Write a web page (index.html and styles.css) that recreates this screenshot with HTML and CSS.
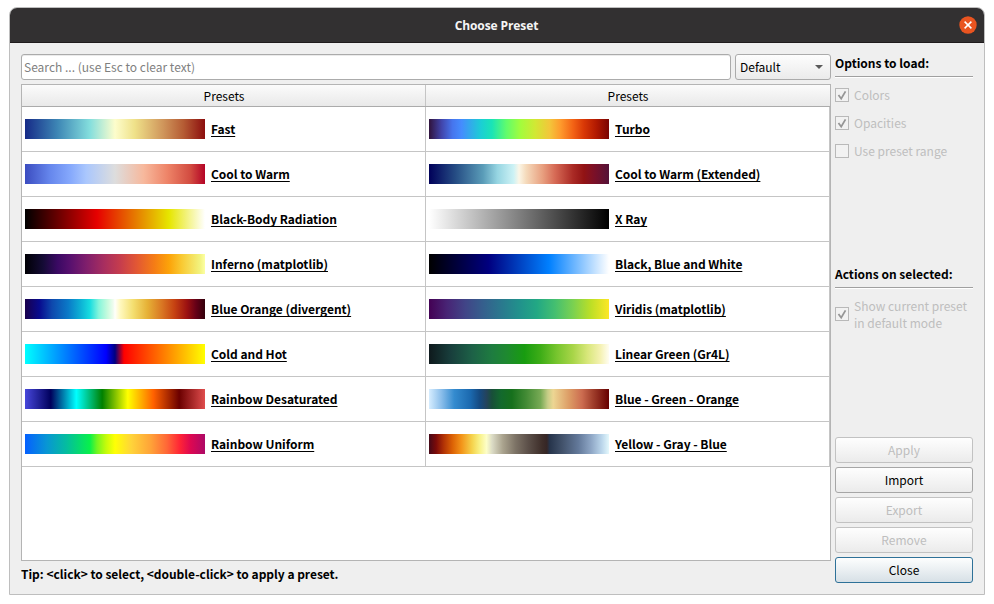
FILE: index.html
```html
<!DOCTYPE html>
<html lang="en">
<head>
<meta charset="utf-8">
<title>Choose Preset</title>
<link rel="stylesheet" href="styles.css">
</head>
<body>
<div class="window">
  <header class="titlebar">
    <h1>Choose Preset</h1>
    <svg class="close-icon" width="18" height="18" viewBox="0 0 18 18"><circle cx="9" cy="9" r="8.7" fill="#e95420"/><path d="M5.6 5.6l6.8 6.8M12.4 5.6l-6.8 6.8" stroke="#fff" stroke-width="1.5" fill="none"/></svg>
  </header>
  <main class="content">
    <section class="left">
      <div class="filters">
        <div class="search">Search ... (use Esc to clear text)</div>
        <div class="combo"><span>Default</span><svg width="8" height="4" viewBox="0 0 8 4"><path d="M0 0h8L4 4z" fill="#5a5a5a"/></svg></div>
      </div>
      <div class="table">
        <div class="head"><div>Presets</div><div>Presets</div></div>
        <div class="row"><div class="cell"><i class="bar fast"></i><span>Fast</span></div><div class="cell"><i class="bar turbo"></i><span>Turbo</span></div></div>
        <div class="row"><div class="cell"><i class="bar coolwarm"></i><span>Cool to Warm</span></div><div class="cell"><i class="bar coolwarm-ext"></i><span>Cool to Warm (Extended)</span></div></div>
        <div class="row"><div class="cell"><i class="bar blackbody"></i><span>Black-Body Radiation</span></div><div class="cell"><i class="bar xray"></i><span>X Ray</span></div></div>
        <div class="row"><div class="cell"><i class="bar inferno"></i><span>Inferno (matplotlib)</span></div><div class="cell"><i class="bar black-blue"></i><span>Black, Blue and White</span></div></div>
        <div class="row"><div class="cell"><i class="bar blue-orange"></i><span>Blue Orange (divergent)</span></div><div class="cell"><i class="bar viridis"></i><span>Viridis (matplotlib)</span></div></div>
        <div class="row"><div class="cell"><i class="bar coldhot"></i><span>Cold and Hot</span></div><div class="cell"><i class="bar green"></i><span>Linear Green (Gr4L)</span></div></div>
        <div class="row"><div class="cell"><i class="bar rainbow-desat"></i><span>Rainbow Desaturated</span></div><div class="cell"><i class="bar bgo"></i><span>Blue - Green - Orange</span></div></div>
        <div class="row"><div class="cell"><i class="bar rainbow-uni"></i><span>Rainbow Uniform</span></div><div class="cell"><i class="bar ygb"></i><span>Yellow - Gray - Blue</span></div></div>
      </div>
      <p class="tip">Tip: &lt;click&gt; to select, &lt;double-click&gt; to apply a preset.</p>
    </section>
    <aside class="side">
      <section class="options">
        <h2>Options to load:</h2>
        <div class="check"><svg class="box" viewBox="0 0 14 14"><rect x=".5" y=".5" width="13" height="13"/><path d="M3.5 7l2.7 3.7L10.5 3.4"/></svg><span>Colors</span></div>
        <div class="check"><svg class="box" viewBox="0 0 14 14"><rect x=".5" y=".5" width="13" height="13"/><path d="M3.5 7l2.7 3.7L10.5 3.4"/></svg><span>Opacities</span></div>
        <div class="check"><svg class="box" viewBox="0 0 14 14"><rect x=".5" y=".5" width="13" height="13"/></svg><span>Use preset range</span></div>
      </section>
      <section class="actions">
        <h2>Actions on selected:</h2>
        <div class="check tall"><svg class="box" viewBox="0 0 14 14"><rect x=".5" y=".5" width="13" height="13"/><path d="M3.5 7l2.7 3.7L10.5 3.4"/></svg><span>Show current preset<br>in default mode</span></div>
      </section>
      <div class="buttons">
        <button disabled>Apply</button>
        <button>Import</button>
        <button disabled>Export</button>
        <button disabled>Remove</button>
        <button class="focus">Close</button>
      </div>
    </aside>
  </main>
</div>
</body>
</html>
```
FILE: styles.css
```css
* { box-sizing: border-box; }
body {
  margin: 0;
  padding: 7px 0 0 9px;
  background: #fff;
  color: #000;
  font: 12px/17px "Noto Sans CJK SC", "Noto Sans", sans-serif;
}
h1, h2, p { margin: 0; }
.window {
  width: 976px;
  height: 588px;
  border: 1px solid #bebebe;
  border-radius: 8px 8px 0 0;
  background: #efefef;
  overflow: hidden;
  display: flex;
  flex-direction: column;
}
.titlebar {
  height: 35px;
  background: #323031;
  border-bottom: 1px solid #1f1b1d;
  display: grid;
  grid-template-columns: 24px 1fr 25px;
  align-items: center;
}
.titlebar h1 {
  grid-column: 2;
  text-align: center;
  color: #f5f5f5;
  font: 700 12px/17px "Open Sans", "Noto Sans", sans-serif;
  letter-spacing: -0.1px;
}
.close-icon { display: block; }
.content {
  flex: 1;
  display: flex;
  gap: 4px;
  padding: 11px;
}
.left { width: 810px; display: flex; flex-direction: column; }
.filters { display: flex; gap: 4px; height: 26px; margin-bottom: 4px; }
.search, .combo {
  border: 1px solid #ababab;
  border-radius: 3px;
  line-height: 23px;
}
.search { width: 710px; padding-left: 2px; background: #fff; color: #7f7f7f; box-shadow: inset 0 1px #ebebeb; }
.combo {
  width: 96px;
  padding: 0 7px 0 4px;
  display: flex;
  align-items: center;
  justify-content: space-between;
  background: linear-gradient(#fdfdfd, #ebebeb);
}
.combo span { margin-bottom: 1px; }
.table { height: 477px; border: 1px solid #b4b4b4; background: #fff; }
.head {
  height: 22px;
  display: grid;
  grid-template-columns: 404px 1fr;
  background: linear-gradient(#fbfbfb, #e9e9e9);
  border-bottom: 1px solid #ababab;
  text-align: center;
  line-height: 21px;
}
.head div:first-child { border-right: 1px solid #c5c5c5; padding-left: 1px; }
.row { height: 45px; display: grid; grid-template-columns: 404px 404px; }
.cell {
  border-right: 1px solid #c5c5c5;
  border-bottom: 1px solid #c5c5c5;
  padding-left: 3px;
  display: flex;
  align-items: center;
  gap: 6px;
}
.cell span {
  font-weight: 700;
  line-height: 16px;
  letter-spacing: -0.03px;
  text-decoration: underline;
  text-decoration-thickness: 1px;
  text-decoration-skip-ink: none;
  text-underline-offset: 2px;
}
.bar { width: 180px; height: 20px; }
.tip { font-weight: 700; margin-top: 4px; letter-spacing: -0.02px; }
.side { width: 138px; display: flex; flex-direction: column; }
.side h2 {
  height: 23px;
  font-size: 12px;
  line-height: 17px;
  border-bottom: 1px solid #a0a0a0;
  box-shadow: 0 1px #fff;
}
.options { height: 211px; }
.options h2 { margin-bottom: 4px; }
.actions { height: 172px; }
.check { height: 28px; display: flex; align-items: center; gap: 5px; color: #bebebe; }
.check span { margin-bottom: 1px; }
.check.tall { height: 52px; }
.check.tall span { margin-bottom: 0; }
.box { width: 14px; height: 14px; flex: none; }
.box rect { fill: #f2f2f2; stroke: #b9b9b9; }
.box path { fill: none; stroke: #969696; stroke-width: 1.8; }
.buttons { display: flex; flex-direction: column; gap: 4px; }
button {
  height: 26px;
  padding: 0;
  border: 1px solid #a6a6a6;
  border-radius: 3px;
  background: linear-gradient(#fefefe, #ebebeb);
  color: #000;
  font: inherit;
  line-height: 24px;
}
button:disabled { color: #bebebe; border-color: #c2c2c2; }
.focus { border-color: #2e7198; background: linear-gradient(#fdfefe, #d7e0e6); }

.fast { background: linear-gradient(90deg, #162a87, #3d86b5 18%, #84dedd 36%, #fdfdcc 50%, #efe189 61%, #cf945a 77%, #b55c34 88%, #8c0e0e); }
.turbo { background: linear-gradient(90deg, #30123b, #4145ab 7%, #4675ed 13%, #458cfe 18%, #1bcfd4 29%, #1ae4b6 35%, #61fc6c 43%, #a4fc3c 51%, #d1e834 59%, #f3c63a 67%, #fe9b2d 73%, #f36315 80%, #d93806 86%, #b11901 93%, #7a0402); }
.coolwarm { background: linear-gradient(90deg, #3b4cc0, #6687ed 14%, #85a8fc 25%, #aac7fd 34%, #dddddd 50%, #f7b89c 66%, #ee8468 79%, #d24b40 92%, #b40426); }
.coolwarm-ext { background: linear-gradient(90deg, #000059, #264e85 15%, #5a9cb8 30%, #96d5e2 38%, #cdf2f5 47%, #fbf6e7 50%, #f5dabb 54%, #e8a080 63%, #d66a55 70%, #aa2a25 80%, #921314 86%, #7a1028 92%, #541238); }
.blackbody { background: linear-gradient(90deg, #000, #e60000 40%, #e6e600 80%, #fff); }
.xray { background: linear-gradient(90deg, #fff, #000); }
.inferno { background: linear-gradient(90deg, #000004, #140b35 10%, #3a0963 18%, #57106e 25%, #7f1e6c 34%, #a82e5f 44%, #c63d4d 53%, #e25734 62%, #f57d15 72%, #fca309 80%, #f9c932 87%, #f2f27d 97%, #fcffa4); }
.black-blue { background: linear-gradient(90deg, #000, #000080 33.3%, #0080ff 66.7%, #fff); }
.blue-orange { background: linear-gradient(90deg, #19004c, #080b8e 8%, #0e48ad 15%, #0a7ac8 24%, #0db2d5 31%, #17dce0 36%, #85f5db 41%, #c9fbde 46%, #effcef 49%, #fffffb 50%, #fff8be 53%, #f4df70 60%, #e6b136 68%, #d97723 76%, #c64212 83%, #9c1111 90%, #650017 95%, #33000b); }
.viridis { background: linear-gradient(90deg, #440154, #482475 10%, #414487 20%, #355f8d 30%, #2a788e 40%, #21918c 50%, #22a884 60%, #44bf70 70%, #7ad151 80%, #bddf26 90%, #fde725); }
.coldhot { background: linear-gradient(90deg, #0ff, #00f 45%, #000080 50%, #f00 55%, #ff0); }
.green { background: linear-gradient(90deg, #0e191c, #183e3c 12%, #1d6147 24%, #1e7c40 35%, #1e8930 43%, #189c10 53%, #3ead17 62%, #77c52e 71%, #a8d548 80%, #d8e77a 88%, #f4f1b0 95%, #fffdf1); }
.rainbow-desat { background: linear-gradient(90deg, #4747db, #00005c 14.3%, #0ff 28.5%, #008000 42.9%, #ff0 57.1%, #ff6100 71.4%, #6b0000 85.7%, #e04d4d); }
.bgo { background: linear-gradient(90deg, #d6edff, #89bdea 7%, #348bcf 14%, #1b69af 23%, #154b83 28%, #24435b 32%, #184f39 35%, #13692d 40%, #16701c 46%, #438b35 54%, #78aa55 62%, #c6cd87 66%, #edd693 69%, #dc9b65 78%, #cc6c50 85%, #a13f2c 91%, #660000); }
.rainbow-uni { background: linear-gradient(90deg, #0560ff, #0896d4 12%, #04bd9f 23%, #08f04b 36%, #72f520 40%, #c4fb0b 45%, #ffff05 50%, #ffd43a 59%, #ffa238 70%, #ff6637 79%, #ff2536 86%, #dd0851 92%, #ad0967); }
.ygb { background: linear-gradient(90deg, #440818, #7c0b09 4%, #b03105 8%, #dc6205 13%, #f39419 18%, #f5d34d 24%, #f8f185 28%, #fdfec8 32%, #dcdcc6 35%, #aaa38e 41%, #7d7366 48%, #5c5049 55%, #3d2d29 63%, #352626 65.5%, #26344b 67%, #42526b 74%, #63799a 83%, #8ea6c5 90%, #bbd6eb 96%, #e4f8fc); }
```
